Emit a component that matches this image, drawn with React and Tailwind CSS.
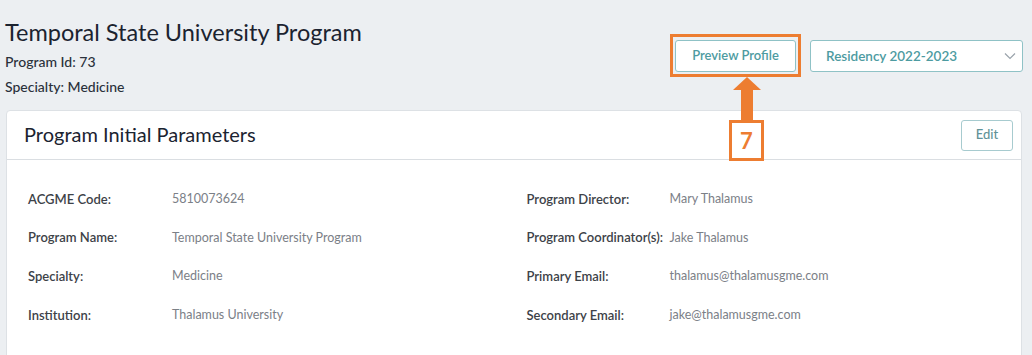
import React from 'react';

const leftRows = [
  ['ACGME Code:', '5810073624'],
  ['Program Name:', 'Temporal State University Program'],
  ['Specialty:', 'Medicine'],
  ['Institution:', 'Thalamus University'],
];

const rightRows = [
  ['Program Director:', 'Mary Thalamus'],
  ['Program Coordinator(s):', 'Jake Thalamus'],
  ['Primary Email:', 'thalamus@thalamusgme.com'],
  ['Secondary Email:', 'jake@thalamusgme.com'],
];

const Field = ({ label, value, labelWidth }) => (
  <div className="flex items-center h-[38.7px]">
    <div className={`${labelWidth} text-[13px] font-semibold text-[#3d4248]`}>{label}</div>
    <div className="text-[12.5px] text-[#7b8087]">{value}</div>
  </div>
);

const App = () => {
  return (
    <div
      className="w-[1032px] h-[355px] overflow-hidden bg-[#eceff2] relative"
      style={{ fontFamily: 'Lato, "Open Sans", sans-serif' }}
    >
      <div className="flex justify-between h-[110px] pl-[5px] pr-[9px]">
        <div className="pt-[17px]">
          <h1 className="text-[23.5px] leading-[30px] text-[#1b2330]">Temporal State University Program</h1>
          <div className="mt-[2px] text-[14px] leading-[25px] font-medium text-[#2a313b]">Program Id: 73</div>
          <div className="text-[14px] leading-[25px] font-medium text-[#2a313b]">Specialty: Medicine</div>
        </div>
        <div className="flex items-start gap-[14px] pt-[40px]">
          <div className="relative">
            <button className="w-[121px] h-[32px] bg-white border border-[#8fc2c6] rounded-[3px] text-[13px] font-semibold text-[#4d9ba1]">
              Preview Profile
            </button>
            {/* annotation overlay */}
            <div className="absolute -left-[5px] -top-[6px] w-[131px] h-[43px] border-[3px] border-[#ed7d31] pointer-events-none" />
            <div className="absolute left-[54px] top-[37px] flex flex-col items-center pointer-events-none">
              <div className="w-0 h-0 border-l-[14px] border-r-[14px] border-b-[13px] border-l-transparent border-r-transparent border-b-[#ed7d31]" />
              <div className="w-[12px] h-[30px] bg-[#ed7d31]" />
              <div className="w-[35px] h-[41px] bg-white border-[3px] border-[#ed7d31] flex items-center justify-center text-[22px] font-bold text-[#ed7d31]">
                7
              </div>
            </div>
          </div>
          <div className="w-[213px] h-[32px] bg-white border border-[#8fc2c6] rounded-[3px] flex items-center justify-between pl-[15px] pr-[6px]">
            <span className="text-[13.5px] font-semibold text-[#4d9ba1]">Residency 2022-2023</span>
            <svg width="12" height="8" viewBox="0 0 12 8" fill="none">
              <path d="M1 1.5l5 5 5-5" stroke="#9aa3ab" strokeWidth="1.2" />
            </svg>
          </div>
        </div>
      </div>

      <div className="ml-[6px] mr-[10px] bg-white border border-[#dde1e5] rounded-[4px] h-[260px]">
        <div className="flex items-center justify-between h-[49px] pl-[17px] pr-[8px] pb-[2px] border-b border-[#dadee2]">
          <h2 className="text-[20px] text-[#1b2330]">Program Initial Parameters</h2>
          <button className="w-[52px] h-[31px] mt-[2px] border border-[#a7cbcf] rounded-[3px] text-[13px] font-medium text-[#5f9297]">
            Edit
          </button>
        </div>
        <div className="grid grid-cols-2 pt-[20px] pl-[21px]">
          <div>
            {leftRows.map(([l, v]) => (
              <Field key={l} label={l} value={v} labelWidth="w-[144px]" />
            ))}
          </div>
          <div className="pl-[2px]">
            {rightRows.map(([l, v]) => (
              <Field key={l} label={l} value={v} labelWidth="w-[143px]" />
            ))}
          </div>
        </div>
      </div>
    </div>
  );
};

export default App;
